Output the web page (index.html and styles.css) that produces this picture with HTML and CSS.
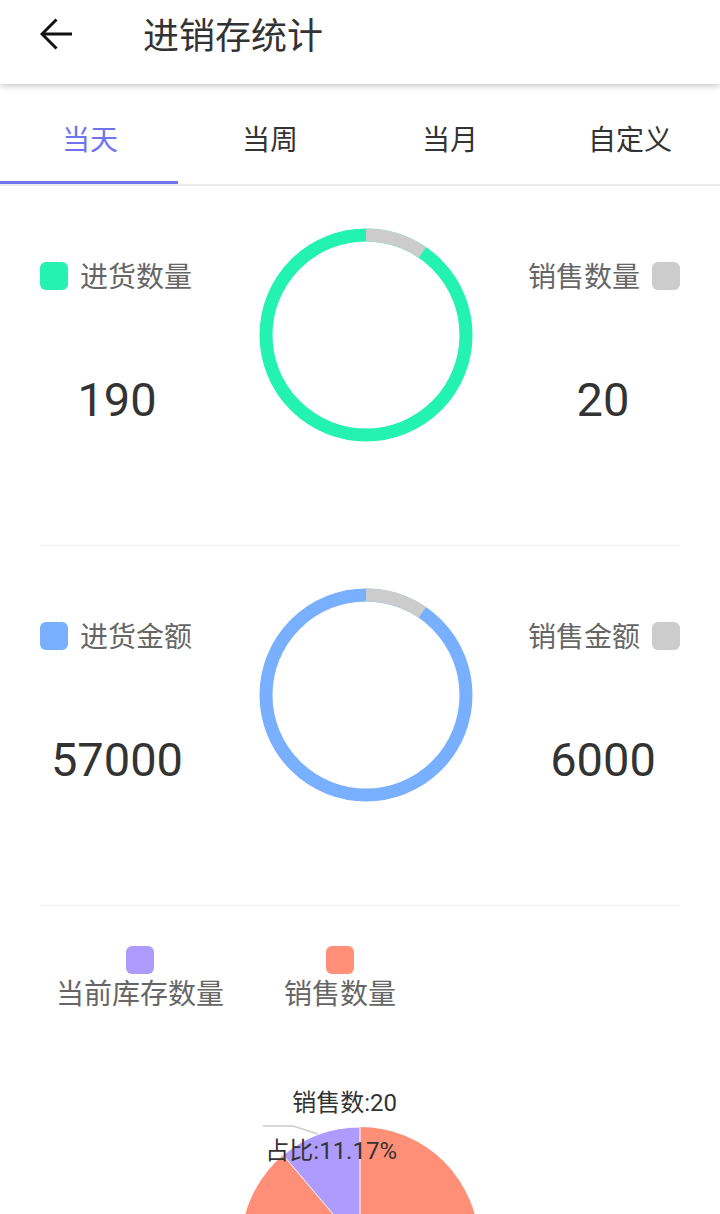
FILE: index.html
```html
<!DOCTYPE html>
<html lang="zh-CN">
<head>
<meta charset="utf-8">
<title>进销存统计</title>
<link rel="stylesheet" href="styles.css">
</head>
<body>
<div class="page">
  <header class="header">
    <svg class="back" width="32" height="32" viewBox="0 0 32 32" aria-hidden="true">
      <line x1="2" y1="16" x2="32" y2="16" stroke="#111" stroke-width="3"/>
      <polyline points="16.5,1.5 2,16 16.5,30.5" fill="none" stroke="#111" stroke-width="3"/>
    </svg>
    <h1 class="title">进销存统计</h1>
  </header>

  <nav class="tabs">
    <div class="tab active">当天</div>
    <div class="tab">当周</div>
    <div class="tab">当月</div>
    <div class="tab">自定义</div>
  </nav>

  <section class="stat">
    <div class="col col-left">
      <div class="legend"><span class="dot dot-green"></span><span class="legend-text">进货数量</span></div>
      <div class="num">190</div>
    </div>
    <div class="col col-mid">
      <svg class="ring" width="214" height="214" viewBox="0 0 214 214">
        <circle cx="107" cy="107" r="100" fill="none" stroke="#23f2b0" stroke-width="13"/>
        <circle cx="107" cy="107" r="100" fill="none" stroke="#cccccc" stroke-width="13" stroke-dasharray="59.8 628.3" transform="rotate(-90 107 107)"/>
      </svg>
    </div>
    <div class="col col-right">
      <div class="legend legend-right"><span class="legend-text">销售数量</span><span class="dot dot-gray"></span></div>
      <div class="num">20</div>
    </div>
  </section>

  <section class="stat">
    <div class="col col-left">
      <div class="legend"><span class="dot dot-blue"></span><span class="legend-text">进货金额</span></div>
      <div class="num">57000</div>
    </div>
    <div class="col col-mid">
      <svg class="ring" width="214" height="214" viewBox="0 0 214 214">
        <circle cx="107" cy="107" r="100" fill="none" stroke="#79afff" stroke-width="13"/>
        <circle cx="107" cy="107" r="100" fill="none" stroke="#cccccc" stroke-width="13" stroke-dasharray="59.8 628.3" transform="rotate(-90 107 107)"/>
      </svg>
    </div>
    <div class="col col-right">
      <div class="legend legend-right"><span class="legend-text">销售金额</span><span class="dot dot-gray"></span></div>
      <div class="num">6000</div>
    </div>
  </section>

  <section class="stock">
    <div class="pie-legend">
      <div class="pie-item"><span class="dot dot-purple"></span><span class="pie-text">当前库存数量</span></div>
      <div class="pie-item"><span class="dot dot-salmon"></span><span class="pie-text">销售数量</span></div>
    </div>
    <svg class="pie" width="720" height="206" viewBox="0 0 720 206">
      <circle cx="360" cy="237" r="119" fill="#ff8f76"/>
      <path d="M360 237 L283.2 146.1 A119 119 0 0 1 360 118 Z" fill="#ad9bfe" stroke="#ffffff" stroke-width="1"/>
      <polyline points="263,117 293,117 318,125" fill="none" stroke="#cccccc" stroke-width="1.5"/>
      <text x="397" y="102" text-anchor="end" class="pie-label">销售数:20</text>
      <text x="397" y="150" text-anchor="end" class="pie-label">占比:11.17%</text>
    </svg>
  </section>
</div>
</body>
</html>
```

FILE: styles.css
```css
html, body {
  margin: 0;
  padding: 0;
  background: #ffffff;
}
body {
  font-family: Roboto, "Noto Sans CJK SC", "Noto Sans", sans-serif;
  color: #333333;
  height: 1214px;
  overflow: hidden;
}
.page {
  width: 720px;
}
.header {
  position: relative;
  z-index: 2;
  height: 84px;
  box-sizing: border-box;
  padding-top: 18px;
  display: flex;
  align-items: flex-start;
  background: #ffffff;
  box-shadow: 0 2px 6px rgba(0, 0, 0, 0.22);
}
.back {
  display: block;
  margin-left: 40px;
}
.title {
  margin: 1px 0 0 71px;
  font-size: 36px;
  line-height: 36px;
  font-weight: 400;
  color: #333333;
}
.tabs {
  display: flex;
  height: 100px;
  border-bottom: 2px solid #eeeeee;
}
.tab {
  position: relative;
  width: 180px;
  box-sizing: border-box;
  padding-top: 43px;
  text-align: center;
  font-size: 28px;
  line-height: 28px;
  color: #333333;
}
.tab.active {
  color: #7073ee;
}
.tab.active::after {
  content: "";
  position: absolute;
  left: 0;
  bottom: 0;
  width: 178px;
  height: 3px;
  background: #7073ee;
}
.stat {
  display: grid;
  grid-template-columns: 154px 1fr 154px;
  margin: 0 40px;
  height: 359px;
  border-bottom: 1px solid #eeeeee;
}
.col-left, .col-right {
  display: flex;
  flex-direction: column;
  padding-top: 76px;
}
.col-mid {
  display: flex;
  justify-content: center;
  padding-top: 42px;
  padding-left: 12px;
}
.ring {
  display: block;
}
.legend {
  display: flex;
  align-items: flex-start;
  gap: 12px;
  height: 28px;
}
.legend-right {
  justify-content: flex-end;
}
.legend-text {
  margin-top: 2px;
  font-size: 28px;
  line-height: 28px;
  color: #666666;
}
.dot {
  display: block;
  width: 28px;
  height: 28px;
  border-radius: 6px;
  flex: none;
}
.dot-green { background: #23f2b0; }
.dot-gray { background: #cccccc; }
.dot-blue { background: #79afff; }
.dot-purple { background: #ad9bfe; }
.dot-salmon { background: #ff8f76; }
.num {
  margin-top: 86px;
  text-align: center;
  font-size: 47px;
  line-height: 47px;
  color: #333333;
}
.stock {
  padding-top: 40px;
}
.pie-legend {
  display: flex;
  gap: 60px;
  padding-left: 56px;
}
.pie-item {
  display: flex;
  flex-direction: column;
  align-items: center;
}
.pie-text {
  margin-top: 7px;
  font-size: 28px;
  line-height: 28px;
  color: #666666;
}
.pie {
  display: block;
}
.pie-label {
  font-family: Roboto, "Noto Sans CJK SC", sans-serif;
  font-size: 24px;
  fill: #333333;
}
```
